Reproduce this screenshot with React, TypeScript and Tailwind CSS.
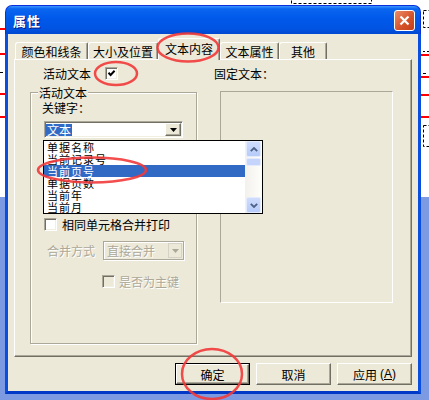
import React from "react";

const raised =
  "border border-t-white border-l-white border-r-[#716f64] border-b-[#716f64] shadow-[inset_-1px_-1px_0_#aca899]";
const sunken =
  "border border-t-[#aca899] border-l-[#aca899] border-b-white border-r-white shadow-[inset_1px_1px_0_#716f64,inset_-1px_-1px_0_#f1efe2]";

function Check({ checked, disabled }: { checked?: boolean; disabled?: boolean }) {
  return (
    <span
      className={`flex items-center justify-center w-[13px] h-[13px] shrink-0 ${sunken} ${
        disabled ? "bg-[#ece9d8]" : "bg-white"
      }`}
    >
      {checked && (
        <svg width="9" height="9" viewBox="0 0 9 9">
          <polyline points="1.5,3.8 3.6,6 7.6,1.8" fill="none" stroke="#000" strokeWidth="2" />
        </svg>
      )}
    </span>
  );
}

function DownArrow({ color = "#000" }: { color?: string }) {
  return (
    <svg width="7" height="4" viewBox="0 0 7 4">
      <polygon points="0,0 7,0 3.5,4" fill={color} />
    </svg>
  );
}

function XpScrollButton({ up }: { up?: boolean }) {
  return (
    <div className="mx-[1px] h-[16px] rounded-[2px] border border-[#e4ebfd] bg-[linear-gradient(to_bottom,#cfdcfc,#b6cbf9)] flex items-center justify-center">
      <svg width="8" height="5" viewBox="0 0 8 5">
        <polyline
          points={up ? "0.8,4.2 4,1 7.2,4.2" : "0.8,0.8 4,4 7.2,0.8"}
          fill="none"
          stroke="#4d6185"
          strokeWidth="1.8"
        />
      </svg>
    </div>
  );
}

const items = ["单据名称", "当前记录号", "当前页号", "单据页数", "当前年", "当前月"];

function Tab({ label, w, active }: { label: string; w: string; active?: boolean }) {
  return (
    <div
      className={`${w} flex items-center justify-center border-t border-l border-t-white border-l-white border-r border-r-[#716f64] rounded-tl-[3px] rounded-tr-[2px] shadow-[inset_-1px_0_0_#aca899] bg-[#ece9d8] ${
        active ? "h-[22px] -mb-[1px] relative z-10 pb-[3px]" : "h-[17px]"
      }`}
    >
      {label}
    </div>
  );
}

function Background() {
  return (
    <svg className="absolute inset-0" width="429" height="400">
      <rect x="0" y="0" width="429" height="400" fill="#fff" />
      <rect x="0" y="197" width="429" height="203" fill="#7b9ae2" />
      {[28, 53, 93, 116].map((y) => (
        <rect key={"l" + y} x="0" y={y} width="6" height="2" fill="#f00" />
      ))}
      {[54, 76, 94, 116].map((y) => (
        <rect key={"r" + y} x="421" y={y} width="8" height="2" fill="#f00" />
      ))}
      <rect x="0" y="72" width="3" height="1" fill="#000" />
      <rect x="423" y="51" width="2" height="1" fill="#000" />
      <rect x="427" y="51" width="2" height="1" fill="#000" />
      <rect x="423" y="73" width="3" height="1" fill="#000" />
      <rect x="423.5" y="10.5" width="10" height="17" fill="none" stroke="#000" strokeDasharray="3 2" />
      <rect x="423.5" y="125.5" width="10" height="21" fill="none" stroke="#000" strokeDasharray="3 2" />
      <rect x="291.5" y="-6.5" width="80" height="10" fill="none" stroke="#000" strokeDasharray="3 2" />
    </svg>
  );
}

function Annotations() {
  return (
    <svg className="absolute inset-0 pointer-events-none z-30" width="429" height="400">
      <g fill="none" stroke="#f23a3a" strokeWidth="2.5" opacity="0.9">
        <ellipse cx="188" cy="47.5" rx="30.5" ry="14" />
        <ellipse cx="116" cy="73.5" rx="21" ry="11.5" />
        <ellipse cx="92" cy="170" rx="54" ry="12.5" />
        <ellipse cx="212" cy="374" rx="30" ry="25" />
      </g>
    </svg>
  );
}

export default function App() {
  return (
    <div className="relative w-[429px] h-[400px] overflow-hidden font-['Noto_Sans_CJK_SC','Liberation_Sans',sans-serif] text-[12px] leading-[13px] text-black">
      <Background />

      {/* XP window */}
      <div className="relative ml-[5px] mt-[5px] w-[416px] h-[389px] flex flex-col">
        {/* Title bar */}
        <div className="h-[29px] shrink-0 rounded-t-[7px] border-t border-x border-[#0831d9] bg-[linear-gradient(to_bottom,#3d95ff_0%,#0a66f0_10%,#0058ea_45%,#0054e3_80%,#0048d0_100%)] flex items-center pl-[7px] pr-[5px]">
          <span className="text-white font-bold text-[13px] tracking-[1px] [text-shadow:1px_1px_0_#0a1883]">
            属性
          </span>
          <div className="ml-auto w-[21px] h-[21px] rounded-[3px] border border-white bg-[linear-gradient(135deg,#eb8b6a,#d45128_60%,#c53f18)] flex items-center justify-center">
            <svg width="11" height="11" viewBox="0 0 11 11">
              <path d="M1.5 1.5 L9.5 9.5 M9.5 1.5 L1.5 9.5" stroke="#fff" strokeWidth="2.2" />
            </svg>
          </div>
        </div>

        {/* Client area */}
        <div className="flex-1 flex flex-col bg-[#ece9d8] border-x-[3px] border-b-[3px] border-x-[#0a4ee0] border-b-[#0038c8]">
          {/* Tabs */}
          <div className="h-[25px] flex items-end pl-[7px] shrink-0">
            <Tab label="颜色和线条" w="w-[73px]" />
            <Tab label="大小及位置" w="w-[70px]" />
            <Tab label="文本内容" w="w-[62px]" active />
            <Tab label="文本属性" w="w-[59px]" />
            <Tab label="其他" w="w-[48px]" />
          </div>

          {/* Panel */}
          <div className={`mx-[6px] h-[298px] shrink-0 flex ${raised}`}>
            {/* Left column */}
            <div className="w-[182px] pl-[15px] pt-[6px] shrink-0">
              <div className="flex items-center h-[14px] ml-[13px]">
                <span>活动文本</span>
                <span className="ml-[14px]">
                  <Check checked />
                </span>
              </div>

              <div className="relative mt-[12px] w-[167px] h-[252px] border border-[#aca899] shadow-[inset_1px_1px_0_#fff,1px_1px_0_#fff]">
                <span className="absolute -top-[7px] left-[7px] px-[1px] bg-[#ece9d8]">活动文本</span>

                <div className="pl-[11px] pt-[8px]">
                  <div>关键字：</div>

                  <div className={`relative mt-[7px] ml-[2px] w-[139px] h-[17px] bg-white flex items-center pl-[1px] ${sunken}`}>
                    <span className="bg-[#316ac5] text-white px-[1px] leading-[12px]">文本</span>
                    <div className={`ml-auto mr-[1px] w-[16px] h-[13px] bg-[#ece9d8] flex items-center justify-center ${raised}`}>
                      <DownArrow />
                    </div>

                    {/* Open drop-down list */}
                    <div className="absolute left-[-2px] top-[18px] w-[220px] h-[74px] bg-white border border-black flex z-20">
                      <div className="flex-1 flex flex-col">
                        {items.map((it) => (
                          <div
                            key={it}
                            className={`h-[12px] flex items-center text-[11px] tracking-[1px] leading-[11px] pl-[3px] ${
                              it === "当前页号" ? "bg-[#316ac5] text-white" : ""
                            }`}
                          >
                            {it}
                          </div>
                        ))}
                      </div>
                      <div className="w-[17px] flex flex-col bg-[linear-gradient(to_right,#f3f1ec,#fefefb)]">
                        <XpScrollButton up />
                        <div className="mx-[1px] mt-[1px] h-[8px] rounded-[2px] border border-[#e4ebfd] bg-[#c4d4fb]" />
                        <div className="flex-1" />
                        <XpScrollButton />
                      </div>
                    </div>
                  </div>

                  <div className="mt-[80px] ml-[2px] flex items-center gap-[5px]">
                    <Check />
                    <span>相同单元格合并打印</span>
                  </div>

                  <div className="mt-[10px] flex items-center text-[#aca899] [text-shadow:1px_1px_0_#fff]">
                    <span className="ml-[5px] w-[56px]">合并方式</span>
                    <div className="w-[81px] h-[19px] border border-[#aca899] shadow-[inset_1px_1px_0_#fff,1px_1px_0_#fff] flex items-center pl-[3px]">
                      <span>直接合并</span>
                      <div className="ml-auto mr-[1px] w-[14px] h-[15px] border border-[#d5d2c5] flex items-center justify-center">
                        <DownArrow color="#aca899" />
                      </div>
                    </div>
                  </div>

                  <div className="mt-[15px] ml-[60px] flex items-center gap-[4px] text-[#aca899] [text-shadow:1px_1px_0_#fff]">
                    <Check disabled />
                    <span>是否为主键</span>
                  </div>
                </div>
              </div>
            </div>

            {/* Right column */}
            <div className="ml-[17px] pt-[7px]">
              <div>固定文本：</div>
              <div className="mt-[11px] ml-[6px] w-[173px] h-[212px] border border-t-[#aca899] border-l-[#aca899] border-b-white border-r-white" />
            </div>
          </div>

          {/* Buttons */}
          <div className="mt-[6px] flex justify-end gap-[6px] pr-[6px]">
            <div className="w-[75px] h-[22px] border border-black">
              <div className={`h-full flex items-center justify-center ${raised}`}>确定</div>
            </div>
            <div className={`w-[75px] h-[22px] flex items-center justify-center ${raised}`}>取消</div>
            <div className={`w-[75px] h-[22px] flex items-center justify-center ${raised}`}>
              应用
              <span className="ml-[3px] font-['Liberation_Sans',sans-serif]">
                (<u>A</u>)
              </span>
            </div>
          </div>
        </div>
      </div>

      <Annotations />
    </div>
  );
}
